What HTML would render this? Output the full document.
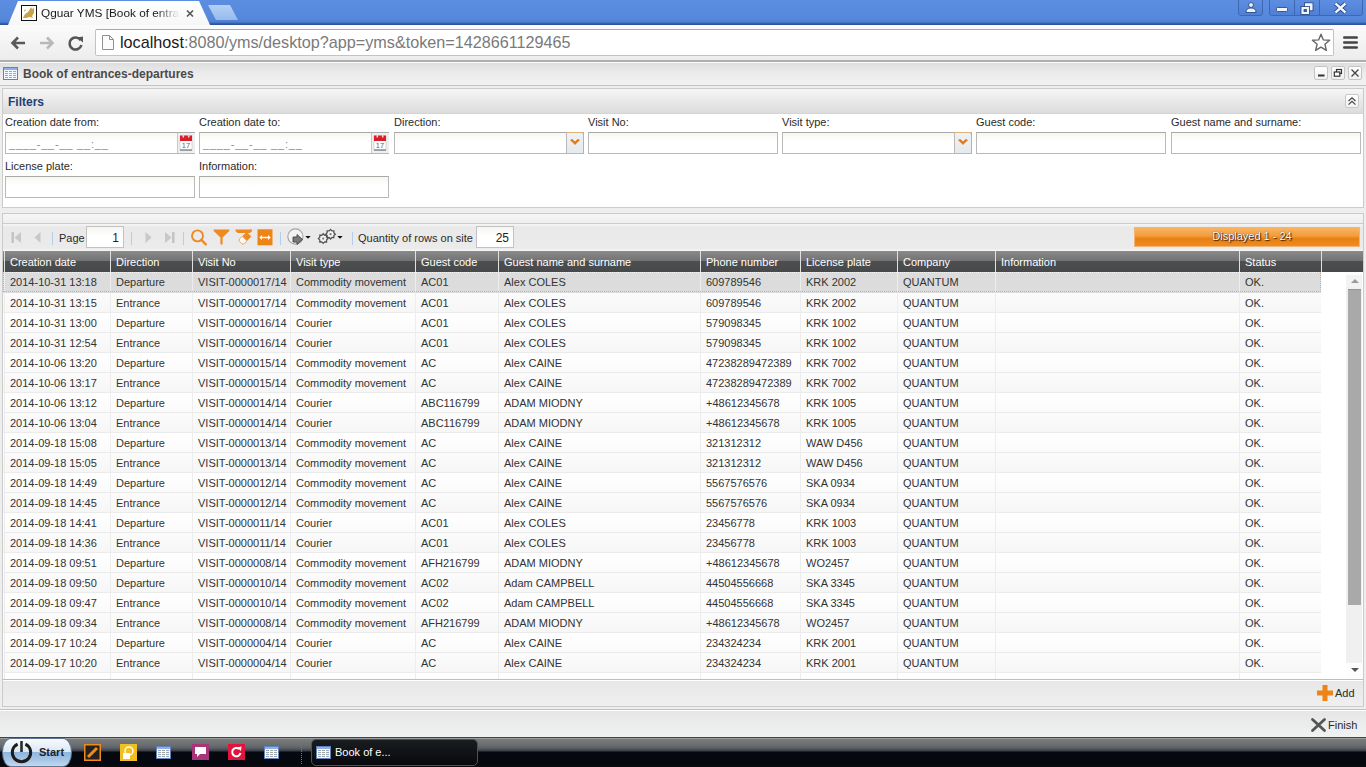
<!DOCTYPE html><html><head><meta charset="utf-8"><style>
*{margin:0;padding:0;box-sizing:border-box}
html,body{width:1366px;height:767px;overflow:hidden;background:#eeeeee;font-family:"Liberation Sans",sans-serif;font-size:11px;color:#222}
.a{position:absolute}
svg{position:absolute;overflow:visible}
#chrome{left:0;top:0;width:1366px;height:25px;background:linear-gradient(#5b8ee0,#5689dd 70%,#4e7fd2 88%,#2f529c 96%,#2f529c)}
#tab{left:8px;top:1px;width:202px;height:25px;background:linear-gradient(#ffffff,#f6f6f6);clip-path:polygon(10px 0,191px 0,202px 24px,202px 25px,0 25px,0 24px)}
#newtab{left:207px;top:5px;width:32px;height:16px;background:linear-gradient(#b3d0f5,#94b9ec);clip-path:polygon(1px 0,23px 0,31px 15px,9px 15px)}
#toolbar{left:0;top:25px;width:1366px;height:37px;background:linear-gradient(#fbfbfb,#ececec);border-bottom:2px solid #adadad}
#omni{left:95px;top:29px;width:1239px;height:27px;background:#fff;border:1px solid #c3c3c3;border-top-color:#a8a8a8;border-radius:2px}
#url{left:120px;top:33px;font-size:16.2px;line-height:19px;color:#7a7a7a;white-space:nowrap}
#url b{font-weight:normal;color:#1a1a1a}
#wtitle{left:0;top:62px;width:1366px;height:24px;background:linear-gradient(#dedede,#ececec 50%,#f2f2f2);border-top:1px solid #fafafa;border-bottom:1px solid #c4c4c4}
#wtitle .t{position:absolute;left:23px;top:4px;font-size:12px;font-weight:bold;color:#4a4a4a}
.wb{position:absolute;top:66px;width:14px;height:14px;border:1px solid #c4c4c4;border-radius:2px;background:linear-gradient(#fff,#f0f0f0)}
#filters{left:2px;top:88px;width:1362px;height:120px;border:1px solid #cbcbcb;background:#fff}
#fhead{left:0;top:0;width:1360px;height:25px;background:linear-gradient(#f6f6f6,#e9e9e9 50%,#dcdcdc);border-bottom:1px solid #d4d4d4}
#fhead .t{position:absolute;left:5px;top:6px;font-size:12px;font-weight:bold;color:#213f74}
.lbl{position:absolute;font-size:11px;color:#2a2a2a;white-space:nowrap}
.inp{position:absolute;height:22px;width:190px;background:linear-gradient(#f7f7f0,#fff 45%);border:1px solid #b9b9b9;border-top-color:#a9a9a9}
.mask{position:absolute;left:3px;top:5px;font-size:11px;color:#8a8a8a;letter-spacing:0.8px;white-space:nowrap}
.cbtn{position:absolute;right:-1px;top:-1px;width:18px;height:22px;border:1px solid #b9b9b9;border-right-color:#e6a86a;border-top-color:#e6b27a;border-top-right-radius:3px;background:linear-gradient(#eef2f4,#e6eaec)}
#grid{left:2px;top:213px;width:1362px;height:494px;border:1px solid #cbcbcb;background:#ebebeb}
#ghead{left:0;top:0;width:1360px;height:10px;background:linear-gradient(#f6f6f6,#eeeeee);border-bottom:1px solid #cccccc}
#gtool{left:0;top:10px;width:1360px;height:27px;background:linear-gradient(#f6f6f6,#e9e9e9 12%,#ebebeb 90%,#f8f8f8)}
.sep{position:absolute;top:232px;width:1px;height:13px;background:#b4cdeb}
.tinp{position:absolute;top:226px;height:22px;width:38px;background:linear-gradient(#f4f4f0,#fff 40%);border:1px solid #c2c2c2;font-size:12px;text-align:right;padding-right:4px;line-height:22px;color:#222}
#disp{left:1134px;top:227px;width:226px;height:20px;border:1px solid #f2b473;background:linear-gradient(#f9b463,#f39a3b 45%,#e8800f 60%,#ee8c22);color:#fff;text-align:center;line-height:16px;font-size:11px;padding-left:10px;text-shadow:0 0 1px #3a2000,1px 1px 1px #3a2000}
#thead{left:0px;top:37px;width:1360px;height:21px;background:linear-gradient(#8a8a8a 0,#727272 48%,#4d4e50 48%,#48494b 100%)}
.th{position:absolute;top:0;height:21px;color:#fff;font-size:11px;line-height:22px;padding-left:5px;border-left:1px solid #e0e0e0;white-space:nowrap}
#tbody{left:0px;top:58px;width:1344px;height:407px;background:#fff;overflow:hidden}
.tr{position:absolute;left:0;height:20px;width:1318px;background:linear-gradient(#fff,#fafafa)}
.tr.alt{background:linear-gradient(#fbfbfb,#f6f6f6)}
.tr.sel{background:#dcdcdc;height:21px}
.tr.sel .td{height:21px;line-height:21px;border-bottom-color:#dcdcdc}
.tr.sel:after{content:"";box-sizing:border-box;position:absolute;left:0;top:0;width:1318px;height:20px;border:1px dotted #f0a868;border-top:1px dotted #f4f4f4}
.td{position:absolute;top:0;height:20px;line-height:20px;padding-left:5px;font-size:11px;color:#333;border-left:1px solid #ededed;border-bottom:1px solid #ebebeb;white-space:nowrap;overflow:hidden}
#sbar{left:1344px;top:59px;width:16px;height:408px;background:#fff}
#gfoot{left:0;top:465px;width:1360px;height:27px;background:linear-gradient(#e7e7e7,#efefef);border-top:1px solid #bdbdbd;box-shadow:inset 0 1px 0 #fff}
#wfoot{left:0;top:709px;width:1366px;height:28px;background:linear-gradient(#e6e6e6,#f0f1f1);border-top:1px solid #c2c2c2;box-shadow:inset 0 1px 0 #fff}
#task{left:0;top:737px;width:1366px;height:30px;background:linear-gradient(#454545 0,#454545 3.3%,#9a9b9c 3.3%,#9a9b9c 6.6%,#7b7c7c 6.7%,#6a6e6f 26.7%,#5c5f6a 36.7%,#3a3c40 46.7%,#05080f 50%,#06090e 93%,#0c0d0e 100%)}
#start{left:2px;top:738px;width:70px;height:29px;border-radius:9px/14px;background:linear-gradient(#f8fbfe,#dbe7f3 48%,#8fb6de 50%,#a9c7e6 80%,#c3d9ef);border:1px solid #5f7894}
#start .t{position:absolute;left:36px;top:7px;font-size:11px;font-weight:bold;color:#1a2230}
#tbtn{left:311px;top:739px;width:167px;height:27px;border:1px solid #4e5156;border-radius:5px;background:linear-gradient(#1a1d20,#07090c)}
#tbtn .t{position:absolute;left:23px;top:6px;font-size:11px;color:#fff}
</style></head><body>
<div class="a" id="chrome"></div><div class="a" id="tab"></div><div class="a" id="newtab"></div>
<div class="a" id="toolbar"></div><div class="a" id="omni"></div>
<div class="a" id="url"><b>localhost</b>:8080/yms/desktop?app=yms&amp;token=1428661129465</div>
<div class="a" id="wtitle"><div class="t">Book of entrances-departures</div></div>
<div class="wb" style="left:1314px"></div><div class="wb" style="left:1331px"></div><div class="wb" style="left:1348px"></div>
<div class="a" id="filters"><div class="a" id="fhead"><div class="t">Filters</div></div></div>
<div class="lbl" style="left:5px;top:116px">Creation date from:</div>
<div class="inp" style="left:5px;top:132px"><div class="mask">____-__-__ __:__</div></div>
<div class="lbl" style="left:199px;top:116px">Creation date to:</div>
<div class="inp" style="left:199px;top:132px"><div class="mask">____-__-__ __:__</div></div>
<div class="lbl" style="left:394px;top:116px">Direction:</div>
<div class="inp" style="left:394px;top:132px"><div class="cbtn"></div></div>
<div class="lbl" style="left:588px;top:116px">Visit No:</div>
<div class="inp" style="left:588px;top:132px"></div>
<div class="lbl" style="left:782px;top:116px">Visit type:</div>
<div class="inp" style="left:782px;top:132px"><div class="cbtn"></div></div>
<div class="lbl" style="left:976px;top:116px">Guest code:</div>
<div class="inp" style="left:976px;top:132px"></div>
<div class="lbl" style="left:1171px;top:116px">Guest name and surname:</div>
<div class="inp" style="left:1171px;top:132px"></div>
<div class="lbl" style="left:5px;top:160px">License plate:</div>
<div class="inp" style="left:5px;top:176px"></div>
<div class="lbl" style="left:199px;top:160px">Information:</div>
<div class="inp" style="left:199px;top:176px"></div>
<div class="a" id="grid"><div class="a" id="ghead"></div><div class="a" id="gtool"></div><div class="a" id="thead">
<div class="th" style="left:1px;width:106px">Creation date</div>
<div class="th" style="left:107px;width:82px">Direction</div>
<div class="th" style="left:189px;width:98px">Visit No</div>
<div class="th" style="left:287px;width:125px">Visit type</div>
<div class="th" style="left:412px;width:83px">Guest code</div>
<div class="th" style="left:495px;width:202px">Guest name and surname</div>
<div class="th" style="left:697px;width:100px">Phone number</div>
<div class="th" style="left:797px;width:97px">License plate</div>
<div class="th" style="left:894px;width:98px">Company</div>
<div class="th" style="left:992px;width:244px">Information</div>
<div class="th" style="left:1236px;width:82px">Status</div>
<div class="th" style="left:1318px;width:42px"></div>
</div><div class="a" id="tbody">
<div class="tr sel" style="top:0px">
<div class="td" style="left:1px;width:106px">2014-10-31 13:18</div>
<div class="td" style="left:107px;width:82px">Departure</div>
<div class="td" style="left:189px;width:98px">VISIT-0000017/14</div>
<div class="td" style="left:287px;width:125px">Commodity movement</div>
<div class="td" style="left:412px;width:83px">AC01</div>
<div class="td" style="left:495px;width:202px">Alex COLES</div>
<div class="td" style="left:697px;width:100px">609789546</div>
<div class="td" style="left:797px;width:97px">KRK 2002</div>
<div class="td" style="left:894px;width:98px">QUANTUM</div>
<div class="td" style="left:992px;width:244px"></div>
<div class="td" style="left:1236px;width:82px">OK.</div>
</div>
<div class="tr alt" style="top:21px">
<div class="td" style="left:1px;width:106px">2014-10-31 13:15</div>
<div class="td" style="left:107px;width:82px">Entrance</div>
<div class="td" style="left:189px;width:98px">VISIT-0000017/14</div>
<div class="td" style="left:287px;width:125px">Commodity movement</div>
<div class="td" style="left:412px;width:83px">AC01</div>
<div class="td" style="left:495px;width:202px">Alex COLES</div>
<div class="td" style="left:697px;width:100px">609789546</div>
<div class="td" style="left:797px;width:97px">KRK 2002</div>
<div class="td" style="left:894px;width:98px">QUANTUM</div>
<div class="td" style="left:992px;width:244px"></div>
<div class="td" style="left:1236px;width:82px">OK.</div>
</div>
<div class="tr" style="top:41px">
<div class="td" style="left:1px;width:106px">2014-10-31 13:00</div>
<div class="td" style="left:107px;width:82px">Departure</div>
<div class="td" style="left:189px;width:98px">VISIT-0000016/14</div>
<div class="td" style="left:287px;width:125px">Courier</div>
<div class="td" style="left:412px;width:83px">AC01</div>
<div class="td" style="left:495px;width:202px">Alex COLES</div>
<div class="td" style="left:697px;width:100px">579098345</div>
<div class="td" style="left:797px;width:97px">KRK 1002</div>
<div class="td" style="left:894px;width:98px">QUANTUM</div>
<div class="td" style="left:992px;width:244px"></div>
<div class="td" style="left:1236px;width:82px">OK.</div>
</div>
<div class="tr alt" style="top:61px">
<div class="td" style="left:1px;width:106px">2014-10-31 12:54</div>
<div class="td" style="left:107px;width:82px">Entrance</div>
<div class="td" style="left:189px;width:98px">VISIT-0000016/14</div>
<div class="td" style="left:287px;width:125px">Courier</div>
<div class="td" style="left:412px;width:83px">AC01</div>
<div class="td" style="left:495px;width:202px">Alex COLES</div>
<div class="td" style="left:697px;width:100px">579098345</div>
<div class="td" style="left:797px;width:97px">KRK 1002</div>
<div class="td" style="left:894px;width:98px">QUANTUM</div>
<div class="td" style="left:992px;width:244px"></div>
<div class="td" style="left:1236px;width:82px">OK.</div>
</div>
<div class="tr" style="top:81px">
<div class="td" style="left:1px;width:106px">2014-10-06 13:20</div>
<div class="td" style="left:107px;width:82px">Departure</div>
<div class="td" style="left:189px;width:98px">VISIT-0000015/14</div>
<div class="td" style="left:287px;width:125px">Commodity movement</div>
<div class="td" style="left:412px;width:83px">AC</div>
<div class="td" style="left:495px;width:202px">Alex CAINE</div>
<div class="td" style="left:697px;width:100px">47238289472389</div>
<div class="td" style="left:797px;width:97px">KRK 7002</div>
<div class="td" style="left:894px;width:98px">QUANTUM</div>
<div class="td" style="left:992px;width:244px"></div>
<div class="td" style="left:1236px;width:82px">OK.</div>
</div>
<div class="tr alt" style="top:101px">
<div class="td" style="left:1px;width:106px">2014-10-06 13:17</div>
<div class="td" style="left:107px;width:82px">Entrance</div>
<div class="td" style="left:189px;width:98px">VISIT-0000015/14</div>
<div class="td" style="left:287px;width:125px">Commodity movement</div>
<div class="td" style="left:412px;width:83px">AC</div>
<div class="td" style="left:495px;width:202px">Alex CAINE</div>
<div class="td" style="left:697px;width:100px">47238289472389</div>
<div class="td" style="left:797px;width:97px">KRK 7002</div>
<div class="td" style="left:894px;width:98px">QUANTUM</div>
<div class="td" style="left:992px;width:244px"></div>
<div class="td" style="left:1236px;width:82px">OK.</div>
</div>
<div class="tr" style="top:121px">
<div class="td" style="left:1px;width:106px">2014-10-06 13:12</div>
<div class="td" style="left:107px;width:82px">Departure</div>
<div class="td" style="left:189px;width:98px">VISIT-0000014/14</div>
<div class="td" style="left:287px;width:125px">Courier</div>
<div class="td" style="left:412px;width:83px">ABC116799</div>
<div class="td" style="left:495px;width:202px">ADAM MIODNY</div>
<div class="td" style="left:697px;width:100px">+48612345678</div>
<div class="td" style="left:797px;width:97px">KRK 1005</div>
<div class="td" style="left:894px;width:98px">QUANTUM</div>
<div class="td" style="left:992px;width:244px"></div>
<div class="td" style="left:1236px;width:82px">OK.</div>
</div>
<div class="tr alt" style="top:141px">
<div class="td" style="left:1px;width:106px">2014-10-06 13:04</div>
<div class="td" style="left:107px;width:82px">Entrance</div>
<div class="td" style="left:189px;width:98px">VISIT-0000014/14</div>
<div class="td" style="left:287px;width:125px">Courier</div>
<div class="td" style="left:412px;width:83px">ABC116799</div>
<div class="td" style="left:495px;width:202px">ADAM MIODNY</div>
<div class="td" style="left:697px;width:100px">+48612345678</div>
<div class="td" style="left:797px;width:97px">KRK 1005</div>
<div class="td" style="left:894px;width:98px">QUANTUM</div>
<div class="td" style="left:992px;width:244px"></div>
<div class="td" style="left:1236px;width:82px">OK.</div>
</div>
<div class="tr" style="top:161px">
<div class="td" style="left:1px;width:106px">2014-09-18 15:08</div>
<div class="td" style="left:107px;width:82px">Departure</div>
<div class="td" style="left:189px;width:98px">VISIT-0000013/14</div>
<div class="td" style="left:287px;width:125px">Commodity movement</div>
<div class="td" style="left:412px;width:83px">AC</div>
<div class="td" style="left:495px;width:202px">Alex CAINE</div>
<div class="td" style="left:697px;width:100px">321312312</div>
<div class="td" style="left:797px;width:97px">WAW D456</div>
<div class="td" style="left:894px;width:98px">QUANTUM</div>
<div class="td" style="left:992px;width:244px"></div>
<div class="td" style="left:1236px;width:82px">OK.</div>
</div>
<div class="tr alt" style="top:181px">
<div class="td" style="left:1px;width:106px">2014-09-18 15:05</div>
<div class="td" style="left:107px;width:82px">Entrance</div>
<div class="td" style="left:189px;width:98px">VISIT-0000013/14</div>
<div class="td" style="left:287px;width:125px">Commodity movement</div>
<div class="td" style="left:412px;width:83px">AC</div>
<div class="td" style="left:495px;width:202px">Alex CAINE</div>
<div class="td" style="left:697px;width:100px">321312312</div>
<div class="td" style="left:797px;width:97px">WAW D456</div>
<div class="td" style="left:894px;width:98px">QUANTUM</div>
<div class="td" style="left:992px;width:244px"></div>
<div class="td" style="left:1236px;width:82px">OK.</div>
</div>
<div class="tr" style="top:201px">
<div class="td" style="left:1px;width:106px">2014-09-18 14:49</div>
<div class="td" style="left:107px;width:82px">Departure</div>
<div class="td" style="left:189px;width:98px">VISIT-0000012/14</div>
<div class="td" style="left:287px;width:125px">Commodity movement</div>
<div class="td" style="left:412px;width:83px">AC</div>
<div class="td" style="left:495px;width:202px">Alex CAINE</div>
<div class="td" style="left:697px;width:100px">5567576576</div>
<div class="td" style="left:797px;width:97px">SKA 0934</div>
<div class="td" style="left:894px;width:98px">QUANTUM</div>
<div class="td" style="left:992px;width:244px"></div>
<div class="td" style="left:1236px;width:82px">OK.</div>
</div>
<div class="tr alt" style="top:221px">
<div class="td" style="left:1px;width:106px">2014-09-18 14:45</div>
<div class="td" style="left:107px;width:82px">Entrance</div>
<div class="td" style="left:189px;width:98px">VISIT-0000012/14</div>
<div class="td" style="left:287px;width:125px">Commodity movement</div>
<div class="td" style="left:412px;width:83px">AC</div>
<div class="td" style="left:495px;width:202px">Alex CAINE</div>
<div class="td" style="left:697px;width:100px">5567576576</div>
<div class="td" style="left:797px;width:97px">SKA 0934</div>
<div class="td" style="left:894px;width:98px">QUANTUM</div>
<div class="td" style="left:992px;width:244px"></div>
<div class="td" style="left:1236px;width:82px">OK.</div>
</div>
<div class="tr" style="top:241px">
<div class="td" style="left:1px;width:106px">2014-09-18 14:41</div>
<div class="td" style="left:107px;width:82px">Departure</div>
<div class="td" style="left:189px;width:98px">VISIT-0000011/14</div>
<div class="td" style="left:287px;width:125px">Courier</div>
<div class="td" style="left:412px;width:83px">AC01</div>
<div class="td" style="left:495px;width:202px">Alex COLES</div>
<div class="td" style="left:697px;width:100px">23456778</div>
<div class="td" style="left:797px;width:97px">KRK 1003</div>
<div class="td" style="left:894px;width:98px">QUANTUM</div>
<div class="td" style="left:992px;width:244px"></div>
<div class="td" style="left:1236px;width:82px">OK.</div>
</div>
<div class="tr alt" style="top:261px">
<div class="td" style="left:1px;width:106px">2014-09-18 14:36</div>
<div class="td" style="left:107px;width:82px">Entrance</div>
<div class="td" style="left:189px;width:98px">VISIT-0000011/14</div>
<div class="td" style="left:287px;width:125px">Courier</div>
<div class="td" style="left:412px;width:83px">AC01</div>
<div class="td" style="left:495px;width:202px">Alex COLES</div>
<div class="td" style="left:697px;width:100px">23456778</div>
<div class="td" style="left:797px;width:97px">KRK 1003</div>
<div class="td" style="left:894px;width:98px">QUANTUM</div>
<div class="td" style="left:992px;width:244px"></div>
<div class="td" style="left:1236px;width:82px">OK.</div>
</div>
<div class="tr" style="top:281px">
<div class="td" style="left:1px;width:106px">2014-09-18 09:51</div>
<div class="td" style="left:107px;width:82px">Departure</div>
<div class="td" style="left:189px;width:98px">VISIT-0000008/14</div>
<div class="td" style="left:287px;width:125px">Commodity movement</div>
<div class="td" style="left:412px;width:83px">AFH216799</div>
<div class="td" style="left:495px;width:202px">ADAM MIODNY</div>
<div class="td" style="left:697px;width:100px">+48612345678</div>
<div class="td" style="left:797px;width:97px">WO2457</div>
<div class="td" style="left:894px;width:98px">QUANTUM</div>
<div class="td" style="left:992px;width:244px"></div>
<div class="td" style="left:1236px;width:82px">OK.</div>
</div>
<div class="tr alt" style="top:301px">
<div class="td" style="left:1px;width:106px">2014-09-18 09:50</div>
<div class="td" style="left:107px;width:82px">Departure</div>
<div class="td" style="left:189px;width:98px">VISIT-0000010/14</div>
<div class="td" style="left:287px;width:125px">Commodity movement</div>
<div class="td" style="left:412px;width:83px">AC02</div>
<div class="td" style="left:495px;width:202px">Adam CAMPBELL</div>
<div class="td" style="left:697px;width:100px">44504556668</div>
<div class="td" style="left:797px;width:97px">SKA 3345</div>
<div class="td" style="left:894px;width:98px">QUANTUM</div>
<div class="td" style="left:992px;width:244px"></div>
<div class="td" style="left:1236px;width:82px">OK.</div>
</div>
<div class="tr" style="top:321px">
<div class="td" style="left:1px;width:106px">2014-09-18 09:47</div>
<div class="td" style="left:107px;width:82px">Entrance</div>
<div class="td" style="left:189px;width:98px">VISIT-0000010/14</div>
<div class="td" style="left:287px;width:125px">Commodity movement</div>
<div class="td" style="left:412px;width:83px">AC02</div>
<div class="td" style="left:495px;width:202px">Adam CAMPBELL</div>
<div class="td" style="left:697px;width:100px">44504556668</div>
<div class="td" style="left:797px;width:97px">SKA 3345</div>
<div class="td" style="left:894px;width:98px">QUANTUM</div>
<div class="td" style="left:992px;width:244px"></div>
<div class="td" style="left:1236px;width:82px">OK.</div>
</div>
<div class="tr alt" style="top:341px">
<div class="td" style="left:1px;width:106px">2014-09-18 09:34</div>
<div class="td" style="left:107px;width:82px">Entrance</div>
<div class="td" style="left:189px;width:98px">VISIT-0000008/14</div>
<div class="td" style="left:287px;width:125px">Commodity movement</div>
<div class="td" style="left:412px;width:83px">AFH216799</div>
<div class="td" style="left:495px;width:202px">ADAM MIODNY</div>
<div class="td" style="left:697px;width:100px">+48612345678</div>
<div class="td" style="left:797px;width:97px">WO2457</div>
<div class="td" style="left:894px;width:98px">QUANTUM</div>
<div class="td" style="left:992px;width:244px"></div>
<div class="td" style="left:1236px;width:82px">OK.</div>
</div>
<div class="tr" style="top:361px">
<div class="td" style="left:1px;width:106px">2014-09-17 10:24</div>
<div class="td" style="left:107px;width:82px">Departure</div>
<div class="td" style="left:189px;width:98px">VISIT-0000004/14</div>
<div class="td" style="left:287px;width:125px">Courier</div>
<div class="td" style="left:412px;width:83px">AC</div>
<div class="td" style="left:495px;width:202px">Alex CAINE</div>
<div class="td" style="left:697px;width:100px">234324234</div>
<div class="td" style="left:797px;width:97px">KRK 2001</div>
<div class="td" style="left:894px;width:98px">QUANTUM</div>
<div class="td" style="left:992px;width:244px"></div>
<div class="td" style="left:1236px;width:82px">OK.</div>
</div>
<div class="tr alt" style="top:381px">
<div class="td" style="left:1px;width:106px">2014-09-17 10:20</div>
<div class="td" style="left:107px;width:82px">Entrance</div>
<div class="td" style="left:189px;width:98px">VISIT-0000004/14</div>
<div class="td" style="left:287px;width:125px">Courier</div>
<div class="td" style="left:412px;width:83px">AC</div>
<div class="td" style="left:495px;width:202px">Alex CAINE</div>
<div class="td" style="left:697px;width:100px">234324234</div>
<div class="td" style="left:797px;width:97px">KRK 2001</div>
<div class="td" style="left:894px;width:98px">QUANTUM</div>
<div class="td" style="left:992px;width:244px"></div>
<div class="td" style="left:1236px;width:82px">OK.</div>
</div>
<div class="tr" style="top:401px">
<div class="td" style="left:1px;width:106px"></div>
<div class="td" style="left:107px;width:82px"></div>
<div class="td" style="left:189px;width:98px"></div>
<div class="td" style="left:287px;width:125px"></div>
<div class="td" style="left:412px;width:83px"></div>
<div class="td" style="left:495px;width:202px"></div>
<div class="td" style="left:697px;width:100px"></div>
<div class="td" style="left:797px;width:97px"></div>
<div class="td" style="left:894px;width:98px"></div>
<div class="td" style="left:992px;width:244px"></div>
<div class="td" style="left:1236px;width:82px"></div>
</div>
</div><div class="a" id="gfoot"></div></div>
<div class="sep" style="left:52px"></div><div class="sep" style="left:131px"></div><div class="sep" style="left:183px"></div><div class="sep" style="left:280px"></div><div class="sep" style="left:352px"></div>
<div class="lbl" style="left:59px;top:232px;font-size:11px">Page</div><div class="tinp" style="left:86px">1</div>
<div class="lbl" style="left:358px;top:232px;font-size:11px">Quantity of rows on site</div><div class="tinp" style="left:476px">25</div>
<div class="a" id="disp">Displayed 1 - 24</div>
<div class="a" id="wfoot"></div>
<div class="lbl" style="left:1335px;top:687px;font-size:11px">Add</div>
<div class="lbl" style="left:1328px;top:719px;font-size:11px">Finish</div>
<div class="a" id="task"></div><div class="a" id="start"><div class="t">Start</div></div><div class="a" id="tbtn"><div class="t">Book of e...</div></div>
<svg style="left:21px;top:5px" width="16" height="16" viewBox="0 0 16 16"><rect x="0.5" y="0.5" width="15" height="15" fill="#fff" stroke="#111"/><path d="M2 13 L4 9 L7 7 L9 4 L10 2 L11 4 L13 3 L13 8 L11 11 L12 13 L9 12 L5 13 Z" fill="#c9a24e"/><path d="M3 6 L5 5" stroke="#c9a24e" stroke-width="1"/></svg>
<div class="a" style="left:41px;top:6px;font-size:11.8px;color:#1a1a1a;white-space:nowrap;width:140px;overflow:hidden;-webkit-mask-image:linear-gradient(90deg,#000 82%,transparent 99%)">Qguar YMS [Book of entra</div>
<svg style="left:186px;top:10px" width="8" height="7" viewBox="0 0 8 7"><path d="M1 0.5 L7 6.5 M7 0.5 L1 6.5" stroke="#555" stroke-width="1.6"/></svg>
<svg style="left:10px;top:36px" width="16" height="14" viewBox="0 0 16 14"><path d="M15 7 H3 M8 1.5 L2.5 7 L8 12.5" fill="none" stroke="#5a5a5a" stroke-width="2.6" stroke-linejoin="miter"/></svg>
<svg style="left:39px;top:36px" width="16" height="14" viewBox="0 0 16 14"><path d="M1 7 H13 M8 1.5 L13.5 7 L8 12.5" fill="none" stroke="#b8b8b8" stroke-width="2.6"/></svg>
<svg style="left:68px;top:35px" width="16" height="16" viewBox="0 0 16 16"><path d="M12.6 5.2 A6 6 0 1 0 13.4 10" fill="none" stroke="#555" stroke-width="2.6"/><path d="M9 2.5 L15 1.5 L15 7.5 Z" fill="#555"/></svg>
<svg style="left:102px;top:35px" width="12" height="15" viewBox="0 0 12 15"><path d="M0.5 0.5 H7.5 L11.5 4.5 V14.5 H0.5 Z" fill="#fbfbfb" stroke="#909090"/><path d="M7.5 0.5 V4.5 H11.5" fill="none" stroke="#909090"/></svg>
<svg style="left:1311px;top:33px" width="20" height="19" viewBox="0 0 20 19"><path d="M10 1.2 L12.4 6.9 L18.6 7.3 L13.9 11.3 L15.4 17.4 L10 14.1 L4.6 17.4 L6.1 11.3 L1.4 7.3 L7.6 6.9 Z" fill="#fff" stroke="#666" stroke-width="1.4" stroke-linejoin="round"/></svg>
<svg style="left:1343px;top:36px" width="15" height="13" viewBox="0 0 15 13"><path d="M1.3 1.5 H13.7 M1.3 6.5 H13.7 M1.3 11.5 H13.7" stroke="#444" stroke-width="2.6" stroke-linecap="round"/></svg>
<div class="a" style="left:1238px;top:-3px;width:25px;height:19px;border:1px solid #3f67b0;border-radius:3px;background:linear-gradient(#5f90e0,#4f80d6)"></div>
<svg style="left:1245px;top:2px" width="12" height="11" viewBox="0 0 12 11"><circle cx="6" cy="3" r="2.4" fill="#eef3fb" stroke="#1e3f7a" stroke-width="0.8"/><path d="M1 10.5 Q1 6 6 6 Q11 6 11 10.5 Z" fill="#eef3fb" stroke="#1e3f7a" stroke-width="0.8"/></svg>
<div class="a" style="left:1269px;top:-3px;width:94px;height:19px;border:1px solid #3f67b0;border-radius:3px;background:linear-gradient(#5f90e0,#4f80d6)"></div>
<div class="a" style="left:1294px;top:0px;width:1px;height:16px;background:#3f67b0"></div><div class="a" style="left:1319px;top:0px;width:1px;height:16px;background:#3f67b0"></div>
<svg style="left:1276px;top:7px" width="12" height="6" viewBox="0 0 12 6"><rect x="0.5" y="0.5" width="11" height="4" rx="1" fill="#f0f4fb" stroke="#1e3f7a" stroke-width="0.8"/></svg>
<svg style="left:1300px;top:2px" width="14" height="13" viewBox="0 0 14 13"><rect x="4.5" y="0.8" width="8.5" height="8" fill="#f0f4fb" stroke="#1e3f7a" stroke-width="0.8"/><rect x="1" y="4.5" width="8.5" height="8" fill="#f0f4fb" stroke="#1e3f7a" stroke-width="0.8"/><rect x="3.6" y="7" width="3.3" height="3" fill="#3a5a9a"/></svg>
<svg style="left:1334px;top:2px" width="13" height="12" viewBox="0 0 13 12"><path d="M1.5 1.5 L11.5 10.5 M11.5 1.5 L1.5 10.5" stroke="#1e3f7a" stroke-width="4.2"/><path d="M1.5 1.5 L11.5 10.5 M11.5 1.5 L1.5 10.5" stroke="#f0f4fb" stroke-width="2.4"/></svg>
<svg style="left:3px;top:67px" width="15" height="13" viewBox="0 0 15 13" shape-rendering="crispEdges"><rect x="0" y="0" width="15" height="13" fill="#5f82bd"/><rect x="1" y="3" width="13" height="9" fill="#f4f9ff"/><rect x="1" y="1" width="13" height="2" fill="#8fb0e4"/><rect x="2" y="4" width="3" height="1" fill="#a0a6ae"/><rect x="6" y="4" width="3" height="1" fill="#a0a6ae"/><rect x="10" y="4" width="3" height="1" fill="#a0a6ae"/><rect x="2" y="6" width="3" height="1" fill="#a0a6ae"/><rect x="6" y="6" width="3" height="1" fill="#a0a6ae"/><rect x="10" y="6" width="3" height="1" fill="#a0a6ae"/><rect x="2" y="8" width="3" height="1" fill="#a0a6ae"/><rect x="6" y="8" width="3" height="1" fill="#a0a6ae"/><rect x="10" y="8" width="3" height="1" fill="#a0a6ae"/><rect x="2" y="10" width="3" height="1" fill="#a0a6ae"/><rect x="6" y="10" width="3" height="1" fill="#a0a6ae"/><rect x="10" y="10" width="3" height="1" fill="#a0a6ae"/></svg>
<svg style="left:1314px;top:66px" width="14" height="14" viewBox="0 0 14 14"><path d="M4 9.5 H10.5" stroke="#333" stroke-width="2"/></svg>
<svg style="left:1331px;top:66px" width="14" height="14" viewBox="0 0 14 14"><rect x="5.5" y="3.5" width="5" height="4" fill="none" stroke="#333" stroke-width="1.2"/><rect x="3.3" y="6" width="5.5" height="4.2" fill="#fff" stroke="#333" stroke-width="1.2"/></svg>
<svg style="left:1348px;top:66px" width="14" height="14" viewBox="0 0 14 14"><path d="M3.5 3.5 L10.5 10.5 M10.5 3.5 L3.5 10.5" stroke="#444" stroke-width="1.3"/></svg>
<div class="a" style="left:1345px;top:94px;width:14px;height:14px;border:1px solid #c8c8c8;border-radius:2px;background:linear-gradient(#fff,#f2f2f2)"></div>
<svg style="left:1345px;top:94px" width="14" height="14" viewBox="0 0 14 14"><path d="M3.5 7 L7 3.8 L10.5 7 M3.5 10.6 L7 7.4 L10.5 10.6" fill="none" stroke="#444" stroke-width="1.2"/></svg>
<svg style="left:177px;top:133px" width="18" height="20" viewBox="0 0 18 20"><rect x="0" y="0" width="18" height="20" fill="#efefef"/><rect x="0" y="0" width="1" height="20" fill="#c8c8c8"/><rect x="3" y="3" width="12" height="14" fill="#fff" stroke="#c4c4c4" stroke-width="0.6"/><rect x="3" y="2.5" width="12" height="5.5" fill="#d81e26"/><rect x="5.5" y="1.5" width="1.6" height="3" fill="#f4d0d0"/><rect x="10.9" y="1.5" width="1.6" height="3" fill="#f4d0d0"/><text x="9" y="15.3" font-size="7.5" text-anchor="middle" fill="#666" font-family="Liberation Sans">17</text><rect x="3" y="16.3" width="12" height="1.5" fill="#8a8a8a"/></svg>
<svg style="left:371px;top:133px" width="18" height="20" viewBox="0 0 18 20"><rect x="0" y="0" width="18" height="20" fill="#efefef"/><rect x="0" y="0" width="1" height="20" fill="#c8c8c8"/><rect x="3" y="3" width="12" height="14" fill="#fff" stroke="#c4c4c4" stroke-width="0.6"/><rect x="3" y="2.5" width="12" height="5.5" fill="#d81e26"/><rect x="5.5" y="1.5" width="1.6" height="3" fill="#f4d0d0"/><rect x="10.9" y="1.5" width="1.6" height="3" fill="#f4d0d0"/><text x="9" y="15.3" font-size="7.5" text-anchor="middle" fill="#666" font-family="Liberation Sans">17</text><rect x="3" y="16.3" width="12" height="1.5" fill="#8a8a8a"/></svg>
<svg style="left:570px;top:139px" width="10" height="7" viewBox="0 0 10 7"><path d="M0.5 1 L5 5.5 L9.5 1 L7.6 0.5 L5 3 L2.4 0.5 Z" fill="#e07818" stroke="#e07818" stroke-width="0.8"/></svg>
<svg style="left:958px;top:139px" width="10" height="7" viewBox="0 0 10 7"><path d="M0.5 1 L5 5.5 L9.5 1 L7.6 0.5 L5 3 L2.4 0.5 Z" fill="#e07818" stroke="#e07818" stroke-width="0.8"/></svg>
<svg style="left:11px;top:232px" width="11" height="11" viewBox="0 0 11 11"><rect x="0.5" y="0" width="2.5" height="11" fill="#c4c4c4"/><path d="M10 0 V11 L3.5 5.5 Z" fill="#c8c8c8"/></svg>
<svg style="left:34px;top:232px" width="7" height="11" viewBox="0 0 7 11"><path d="M6.5 0 V11 L0.5 5.5 Z" fill="#c8c8c8"/></svg>
<svg style="left:145px;top:232px" width="7" height="11" viewBox="0 0 7 11"><path d="M0.5 0 V11 L6.5 5.5 Z" fill="#c8c8c8"/></svg>
<svg style="left:164px;top:232px" width="11" height="11" viewBox="0 0 11 11"><rect x="8" y="0" width="2.5" height="11" fill="#c4c4c4"/><path d="M1 0 V11 L7.5 5.5 Z" fill="#c8c8c8"/></svg>
<svg style="left:190px;top:229px" width="18" height="17" viewBox="0 0 18 17"><circle cx="7.5" cy="6.9" r="5.5" fill="none" stroke="#ef8a22" stroke-width="1.9"/><path d="M11.5 11 L15.8 15.3" stroke="#ef8a22" stroke-width="2.4" stroke-linecap="round"/></svg>
<svg style="left:213px;top:229px" width="17" height="17" viewBox="0 0 17 17"><path d="M0.7 0.6 H16.3 V2 L9.6 8.5 V15 Q8.5 16.4 7.4 15 V8.5 L0.7 2 Z" fill="#ef8a22"/></svg>
<svg style="left:235px;top:229px" width="18" height="17" viewBox="0 0 18 17"><path d="M0.5 0.6 H17 V2 L15 4 H2.5 L0.5 2 Z" fill="#ef8a22"/><path d="M9 5.5 L11.6 2.9 L16.3 7.6 L12.2 11.7 L7.5 7 Z" fill="#ef8a22"/><path d="M7.2 7.3 L11.9 12 L9.4 14.5 Q8 15.9 6.6 14.5 L4.7 12.6 Q3.3 11.2 4.7 9.8 Z" fill="#fbfbfb" stroke="#f0a45a" stroke-width="1"/></svg>
<svg style="left:257px;top:229px" width="16" height="17" viewBox="0 0 16 17"><rect x="0.5" y="0.3" width="15" height="16" fill="#ef8416"/><path d="M4 8.5 H12" stroke="#fff" stroke-width="1.4"/><path d="M2.3 8.5 L5 6 V11 Z M13.7 8.5 L11 6 V11 Z" fill="#fff"/></svg>
<svg style="left:286px;top:227px" width="26" height="19" viewBox="0 0 26 19"><circle cx="9.4" cy="9.5" r="7.6" fill="#f3f3f3" stroke="#a4a4a4" stroke-width="1.1"/><path d="M7 10 H11 V7.5 L16.5 12.5 L11 17.5 V15 H7 Z" fill="#7a7a7a" stroke="#444" stroke-width="0.9" stroke-linejoin="round"/><path d="M19.3 9 H24.7 L22 11.8 Z" fill="#111"/></svg>
<svg style="left:318px;top:227px" width="26" height="19" viewBox="0 0 26 19"><polygon points="10.00,11.60 8.53,12.98 8.59,14.99 6.58,14.93 5.20,16.40 3.82,14.93 1.81,14.99 1.87,12.98 0.40,11.60 1.87,10.22 1.81,8.21 3.82,8.27 5.20,6.80 6.58,8.27 8.59,8.21 8.53,10.22" fill="#f3f3f3" stroke="#555" stroke-width="1.3"/><circle cx="5.2" cy="11.6" r="1.1" fill="#777"/><polygon points="17.30,7.20 15.83,8.58 15.89,10.59 13.88,10.53 12.50,12.00 11.12,10.53 9.11,10.59 9.17,8.58 7.70,7.20 9.17,5.82 9.11,3.81 11.12,3.87 12.50,2.40 13.88,3.87 15.89,3.81 15.83,5.82" fill="#f3f3f3" stroke="#555" stroke-width="1.3"/><circle cx="12.5" cy="7.2" r="1.1" fill="#777"/><path d="M19.3 9 H24.7 L22 11.8 Z" fill="#111"/></svg>
<div class="a" style="left:1346px;top:272px;width:17px;height:407px;background:#fdfdfd"></div><div class="a" style="left:1346px;top:275px;width:16px;height:12px;background:#f3f3f3"></div>
<svg style="left:1350px;top:278px" width="10" height="6" viewBox="0 0 10 6"><path d="M1 5 L5 1 L9 5 Z" fill="#9a9a9a"/></svg>
<div class="a" style="left:1346px;top:287px;width:16px;height:376px;background:#f0f0f0"></div><div class="a" style="left:1348px;top:289px;width:13px;height:316px;background:#a9a9a9;border-top:1px solid #949494"></div>
<svg style="left:1350px;top:667px" width="10" height="6" viewBox="0 0 10 6"><path d="M1 1 L5 5 L9 1 Z" fill="#555"/></svg>
<svg style="left:1317px;top:685px" width="16" height="16" viewBox="0 0 16 16"><path d="M8 0 V16 M0 8 H16" stroke="#ee8318" stroke-width="5"/></svg>
<svg style="left:1311px;top:718px" width="15" height="14" viewBox="0 0 15 14"><path d="M1.5 1.5 L13.5 12.5 M13.5 1.5 L1.5 12.5" stroke="#555" stroke-width="2.8" stroke-linecap="round"/></svg>
<svg style="left:10px;top:740px" width="24" height="24" viewBox="0 0 24 24"><path d="M7.6 4.2 A9.2 9.2 0 1 0 15.4 4.2" fill="none" stroke="#1c1c1c" stroke-width="3"/><path d="M11.5 1 V12" stroke="#2a2a2a" stroke-width="2.6"/></svg>
<svg style="left:84px;top:744px" width="17" height="17" viewBox="0 0 17 17"><rect x="0" y="0" width="17" height="17" fill="#f08a1c"/><rect x="1.5" y="1.5" width="14" height="14" fill="#222"/><path d="M4 13 L13 4" stroke="#f08a1c" stroke-width="3"/></svg>
<svg style="left:120px;top:744px" width="17" height="17" viewBox="0 0 17 17"><rect x="0" y="0" width="17" height="17" fill="#f0c020"/><circle cx="9" cy="7" r="4" fill="none" stroke="#fff" stroke-width="1.5"/><rect x="3" y="9" width="7" height="6" fill="#fff"/></svg>
<svg style="left:156px;top:746px" width="15" height="13" viewBox="0 0 15 13" shape-rendering="crispEdges"><rect x="0" y="0" width="15" height="13" fill="#5f82bd"/><rect x="1" y="3" width="13" height="9" fill="#f4f9ff"/><rect x="1" y="1" width="13" height="2" fill="#8fb0e4"/><rect x="2" y="4" width="3" height="1" fill="#a0a6ae"/><rect x="6" y="4" width="3" height="1" fill="#a0a6ae"/><rect x="10" y="4" width="3" height="1" fill="#a0a6ae"/><rect x="2" y="6" width="3" height="1" fill="#a0a6ae"/><rect x="6" y="6" width="3" height="1" fill="#a0a6ae"/><rect x="10" y="6" width="3" height="1" fill="#a0a6ae"/><rect x="2" y="8" width="3" height="1" fill="#a0a6ae"/><rect x="6" y="8" width="3" height="1" fill="#a0a6ae"/><rect x="10" y="8" width="3" height="1" fill="#a0a6ae"/><rect x="2" y="10" width="3" height="1" fill="#a0a6ae"/><rect x="6" y="10" width="3" height="1" fill="#a0a6ae"/><rect x="10" y="10" width="3" height="1" fill="#a0a6ae"/></svg>
<svg style="left:192px;top:744px" width="17" height="16" viewBox="0 0 17 16"><rect x="0" y="0" width="17" height="16" fill="#a8357a"/><path d="M3 3 H14 V10 H8 L5 13 V10 H3 Z" fill="#fff"/></svg>
<svg style="left:228px;top:744px" width="17" height="16" viewBox="0 0 17 16"><rect x="0" y="0" width="17" height="16" fill="#e0143c"/><path d="M11.2 5 A4.2 4.2 0 1 0 12.5 9" fill="none" stroke="#fff" stroke-width="2"/><path d="M9 3.5 L13.5 2.5 L13 7 Z" fill="#fff"/></svg>
<svg style="left:264px;top:746px" width="15" height="13" viewBox="0 0 15 13" shape-rendering="crispEdges"><rect x="0" y="0" width="15" height="13" fill="#5f82bd"/><rect x="1" y="3" width="13" height="9" fill="#f4f9ff"/><rect x="1" y="1" width="13" height="2" fill="#8fb0e4"/><rect x="2" y="4" width="3" height="1" fill="#a0a6ae"/><rect x="6" y="4" width="3" height="1" fill="#a0a6ae"/><rect x="10" y="4" width="3" height="1" fill="#a0a6ae"/><rect x="2" y="6" width="3" height="1" fill="#a0a6ae"/><rect x="6" y="6" width="3" height="1" fill="#a0a6ae"/><rect x="10" y="6" width="3" height="1" fill="#a0a6ae"/><rect x="2" y="8" width="3" height="1" fill="#a0a6ae"/><rect x="6" y="8" width="3" height="1" fill="#a0a6ae"/><rect x="10" y="8" width="3" height="1" fill="#a0a6ae"/><rect x="2" y="10" width="3" height="1" fill="#a0a6ae"/><rect x="6" y="10" width="3" height="1" fill="#a0a6ae"/><rect x="10" y="10" width="3" height="1" fill="#a0a6ae"/></svg>
<div class="a" style="left:301px;top:741px;width:1px;height:23px;border-left:1px dotted #777"></div>
<svg style="left:316px;top:746px" width="15" height="13" viewBox="0 0 15 13" shape-rendering="crispEdges"><rect x="0" y="0" width="15" height="13" fill="#5f82bd"/><rect x="1" y="3" width="13" height="9" fill="#f4f9ff"/><rect x="1" y="1" width="13" height="2" fill="#8fb0e4"/><rect x="2" y="4" width="3" height="1" fill="#a0a6ae"/><rect x="6" y="4" width="3" height="1" fill="#a0a6ae"/><rect x="10" y="4" width="3" height="1" fill="#a0a6ae"/><rect x="2" y="6" width="3" height="1" fill="#a0a6ae"/><rect x="6" y="6" width="3" height="1" fill="#a0a6ae"/><rect x="10" y="6" width="3" height="1" fill="#a0a6ae"/><rect x="2" y="8" width="3" height="1" fill="#a0a6ae"/><rect x="6" y="8" width="3" height="1" fill="#a0a6ae"/><rect x="10" y="8" width="3" height="1" fill="#a0a6ae"/><rect x="2" y="10" width="3" height="1" fill="#a0a6ae"/><rect x="6" y="10" width="3" height="1" fill="#a0a6ae"/><rect x="10" y="10" width="3" height="1" fill="#a0a6ae"/></svg>
</body></html>
